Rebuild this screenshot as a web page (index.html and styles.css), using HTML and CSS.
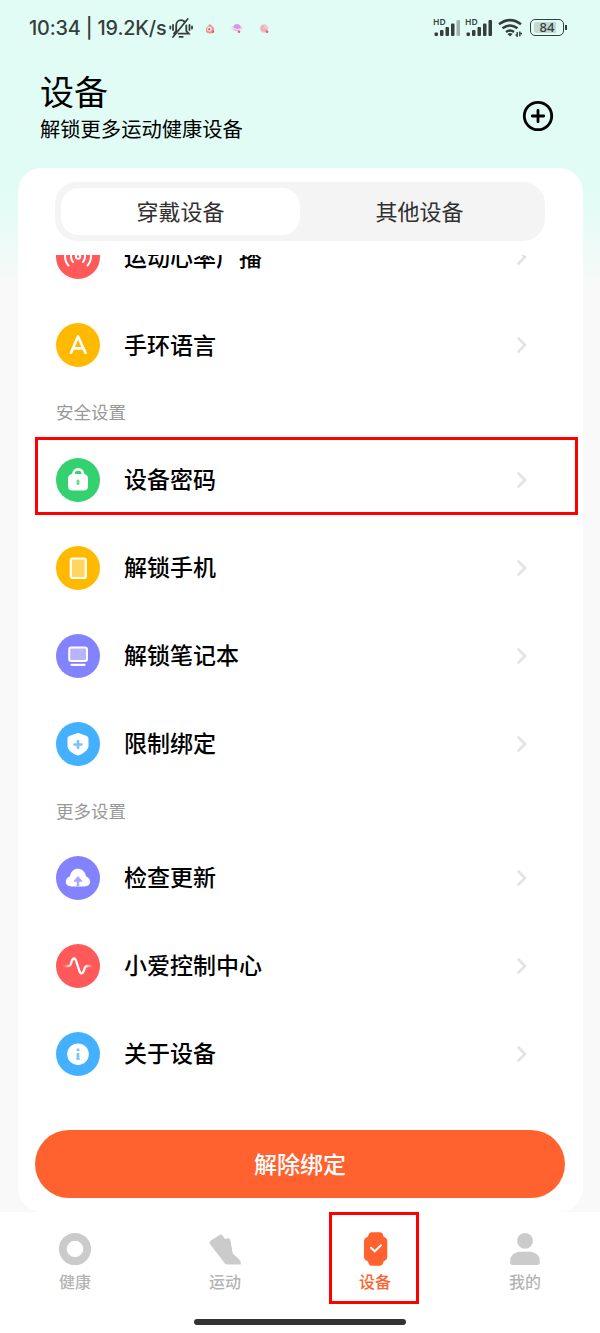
FILE: index.html
```html
<!DOCTYPE html>
<html lang="zh-CN">
<head>
<meta charset="utf-8">
<title>设备</title>
<link rel="stylesheet" href="styles.css">
</head>
<body>
<div class="app">
  <div class="status">
    <span class="clock">10:34 | 19.2K/s</span>
    <svg class="bell" width="24" height="22" viewBox="0 0 24 22" fill="none" stroke="#343e3b" stroke-width="1.8" stroke-linecap="round">
      <path d="M5 16.6 7.2 13.8V8.5C7.2 5.5 9.3 3.2 12 3.2c1.400 0 2.500.5 3.300 1.300M17.300 8.500v5.300l2.500 2.800H9.500M4 20 18.700 2M10.500 19.800h3.300M4 8v5M1.300 9.500v2M20.500 8v5M23 9.500v2"/>
    </svg>
    <span class="notes">
      <svg width="10" height="11" viewBox="0 0 10 11"><path d="M1 5 5 1l4 4v4q-4 3-8 0Z" fill="#ee8f92"/><circle cx="4.500" cy="6" r="2.500" fill="#fbe3e5"/><circle cx="4.300" cy="6.300" r="1" fill="#bd4155"/><circle cx="8" cy="8.800" r="1.200" fill="#e75866"/></svg>
      <svg width="12" height="11" viewBox="0 0 12 11"><ellipse cx="6" cy="5" rx="5.500" ry="2.800" fill="#f2c6df"/><circle cx="6" cy="4.500" r="3.500" fill="#d19be8"/><path d="M1 4.500q5 4 10 1" stroke="#fadcec" stroke-width="1.500" fill="none"/><circle cx="8" cy="8.800" r="1.300" fill="#e55f83"/></svg>
      <svg width="10" height="11" viewBox="0 0 10 11"><circle cx="5" cy="5.500" r="4.200" fill="#f2c7cc"/><path d="M5 3a2.500 2.500 0 1 0 2.500 3M5 5v2" stroke="#d8949d" stroke-width=".8" fill="none"/><circle cx="8" cy="8.800" r="1.300" fill="#df5d6b"/></svg>
    </span>
    <span class="radios">
      <svg width="27" height="20" viewBox="0 0 27 20" fill="#343e3b"><text class="hd" x="0" y="7.200">HD</text><rect x="1.500" y="14.500" width="3.500" height="3.500" rx=".9"/><rect x="7" y="12" width="3.500" height="6" rx=".9"/><rect x="12.500" y="9" width="3.500" height="9" rx=".9"/><rect x="18" y="5.500" width="3.500" height="12.500" rx=".9"/><rect x="23.500" y="2" width="3.500" height="16" rx=".9" fill="#a2b1ad"/></svg>
      <svg width="27" height="20" viewBox="0 0 27 20" fill="#343e3b"><text class="hd" x="0" y="7.200">HD</text><rect x="1.500" y="14.500" width="3.500" height="3.500" rx=".9"/><rect x="7" y="12" width="3.500" height="6" rx=".9"/><rect x="12.500" y="9" width="3.500" height="9" rx=".9"/><rect x="18" y="5.500" width="3.500" height="12.500" rx=".9"/><rect x="23.500" y="2" width="3.500" height="16" rx=".9"/></svg>
      <svg class="wifi" width="25" height="20" viewBox="0 0 25 20" fill="none" stroke="#343e3b" stroke-width="2.500"><path d="M1 6.300q11-8.300 22 0M4.500 10.300q7.500-5.700 15 0M8 14q4-3 8 0"/><path d="M9.500 16q2.500-2 5 0L12 18.500Z" fill="#343e3b" stroke="none"/><path d="M19.200 14v5M21.800 13.500v4.800M17.500 17h1.500M22 15.500h2" stroke-width="1.400"/></svg>
      <span class="battery"><span>84</span></span>
    </span>
  </div>

  <header class="head">
    <div>
      <h1>设备</h1>
      <p>解锁更多运动健康设备</p>
    </div>
    <svg class="add" width="32" height="32" viewBox="0 0 32 32" fill="none" stroke="#000" stroke-width="2.800" stroke-linecap="round"><circle cx="16" cy="16" r="13.700"/><path d="M16 10.300v11.400M10.300 16h11.400"/></svg>
  </header>

  <main class="sheet">
    <div class="tabs"><span class="tab on">穿戴设备</span><span class="tab">其他设备</span></div>
    <div class="scroller">
      <div class="list">
        <div class="row">
          <svg class="ico" viewBox="0 0 44 44"><circle cx="22" cy="22" r="22" fill="#ff5959"/><g fill="none" stroke="#fff" stroke-width="2" stroke-linecap="round"><circle cx="22" cy="21.500" r="2.200"/><path d="M17 27a8.500 8.500 0 0 1 0-11M27 27a8.500 8.500 0 0 0 0-11M12.500 30.500a13.500 13.500 0 0 1 0-18M31.500 30.500a13.500 13.500 0 0 0 0-18"/></g></svg>
          <span class="label">运动心率广播</span><svg class="go" viewBox="0 0 12 18"><path d="m2.500 2.500 6.500 6.500-6.500 6.500"/></svg>
        </div>
        <div class="row">
          <svg class="ico" viewBox="0 0 44 44"><circle cx="22" cy="22" r="22" fill="#ffba00"/><path d="M15 29.700 22 13.500l7.500 16.200M17.500 25.300h10" fill="none" stroke="#fff" stroke-width="2.700" stroke-linecap="round" stroke-linejoin="round"/></svg>
          <span class="label">手环语言</span><svg class="go" viewBox="0 0 12 18"><path d="m2.500 2.500 6.500 6.500-6.500 6.500"/></svg>
        </div>
        <h2 class="group">安全设置</h2>
        <div class="row marked">
          <svg class="ico" viewBox="0 0 44 44"><circle cx="22" cy="22" r="22" fill="#33d170"/><path d="M17.500 17v-1a4.700 4.700 0 0 1 9.400 0v1" fill="none" stroke="#fff" stroke-width="2.800"/><path d="M15.500 16h13q3.500 1 3.500 4.500V28q0 4.500-4.500 4.500h-11Q12 32.500 12 28v-7.500q0-3.500 3.500-4.500Z" fill="#fff"/><rect x="20.500" y="21.500" width="3" height="5.500" rx="1.500" fill="#66dc92"/></svg>
          <span class="label">设备密码</span><svg class="go" viewBox="0 0 12 18"><path d="m2.500 2.500 6.500 6.500-6.500 6.500"/></svg>
        </div>
        <div class="row">
          <svg class="ico" viewBox="0 0 44 44"><circle cx="22" cy="22" r="22" fill="#ffba00"/><rect x="14.800" y="12.500" width="15" height="19.500" rx="2" fill="#ffd55f" stroke="#fff" stroke-width="2.200"/></svg>
          <span class="label">解锁手机</span><svg class="go" viewBox="0 0 12 18"><path d="m2.500 2.500 6.500 6.500-6.500 6.500"/></svg>
        </div>
        <div class="row">
          <svg class="ico" viewBox="0 0 44 44"><circle cx="22" cy="22" r="22" fill="#8382ff"/><rect x="13.200" y="13.500" width="17.800" height="13.500" rx="2" fill="#b8b5ff" stroke="#fff" stroke-width="2"/><path d="M15.500 30.800h13" stroke="#fff" stroke-width="2.200" stroke-linecap="round"/></svg>
          <span class="label">解锁笔记本</span><svg class="go" viewBox="0 0 12 18"><path d="m2.500 2.500 6.500 6.500-6.500 6.500"/></svg>
        </div>
        <div class="row">
          <svg class="ico" viewBox="0 0 44 44"><circle cx="22" cy="22" r="22" fill="#43b1ff"/><path d="M20.800 11.300q1.200-.7 2.400 0l7.500 2.600q1.800.6 1.800 2.500v7.400c0 3.200-2.700 6.200-8.700 9.300q-1.800.9-3.600 0c-6-3-8.700-6.100-8.700-9.300v-7.400q0-1.900 1.800-2.500Z" fill="#fff"/><path d="M22 19v7M18.500 22.500h7" stroke="#74c5ff" stroke-width="2.600" stroke-linecap="round"/></svg>
          <span class="label">限制绑定</span><svg class="go" viewBox="0 0 12 18"><path d="m2.500 2.500 6.500 6.500-6.500 6.500"/></svg>
        </div>
        <h2 class="group more">更多设置</h2>
        <div class="row">
          <svg class="ico" viewBox="0 0 44 44"><circle cx="22" cy="22" r="22" fill="#8382ff"/><path d="M15.500 30.500c-7.500 0-7.200-8-1.500-10.200 1.300-10 14.500-10 16 0 5.800 2.400 5.800 10.200-1.500 10.200Z" fill="#fff"/><path d="m22 20.500 4 4.700h-8Z" fill="#aaa7ff" stroke="#aaa7ff" stroke-linejoin="round"/><path d="M22 24v6.500" stroke="#aaa7ff" stroke-width="2.500"/></svg>
          <span class="label">检查更新</span><svg class="go" viewBox="0 0 12 18"><path d="m2.500 2.500 6.500 6.500-6.500 6.500"/></svg>
        </div>
        <div class="row">
          <svg class="ico" viewBox="0 0 44 44"><defs><linearGradient id="fade"><stop offset="0" stop-color="#fff" stop-opacity=".1"/><stop offset=".25" stop-color="#fff"/><stop offset=".75" stop-color="#fff"/><stop offset="1" stop-color="#fff" stop-opacity=".2"/></linearGradient></defs><circle cx="22" cy="22" r="22" fill="#ff5959"/><path d="M8.500 22h4.200c1.900 0 2.100-2 2.900-4.500 1.200-4 3.500-4 4.700 0l3 9.200c1.200 3.700 3.300 3.700 4.500 0 .9-2.800 1.200-4.700 3.500-4.700h4" fill="none" stroke="url(#fade)" stroke-width="2.300" stroke-linecap="round"/></svg>
          <span class="label">小爱控制中心</span><svg class="go" viewBox="0 0 12 18"><path d="m2.500 2.500 6.500 6.500-6.500 6.500"/></svg>
        </div>
        <div class="row">
          <svg class="ico" viewBox="0 0 44 44"><circle cx="22" cy="22" r="22" fill="#43b1ff"/><circle cx="22" cy="22.200" r="10.800" fill="#fff"/><circle cx="22" cy="17.800" r="1.500" fill="#74c5ff"/><path d="M20.500 21h2.800v5.500h.7v1.300h-4v-1.300h.7V22h-.2Z" fill="#74c5ff"/></svg>
          <span class="label">关于设备</span><svg class="go" viewBox="0 0 12 18"><path d="m2.500 2.500 6.500 6.500-6.500 6.500"/></svg>
        </div>
      </div>
    </div>
    <button class="unbind">解除绑定</button>
  </main>

  <nav class="nav">
    <div class="item"><svg viewBox="0 0 36 36"><circle cx="18" cy="18" r="12.200" fill="none" stroke="#cbcbcb" stroke-width="7.800"/></svg><span>健康</span></div>
    <div class="item"><svg viewBox="0 0 36 36"><path d="M4 9.500 13 3.800q1.500-.6 2.500.7l2.800 3.800 2-1q2.500-.4 3 1.600l2.500 13.600 6 5.600q2.500 2.500 1.900 5.400H20.500q-1.800 0-3-1.500L3.200 13.200Q1.700 10.800 4 9.500Z" fill="#cbcbcb"/></svg><span>运动</span></div>
    <div class="item active"><svg viewBox="0 0 36 36"><path d="M14 1.300h9.500l2 1.200 1 3 2.300 1.500q1.500 1 1.500 3.200v15.600q0 2.200-1.500 3.200l-2.300 1.500-1 3-2 1.200H14l-2-1.200-1-3L8.500 29Q7 28 7 25.800V10.200Q7 8 8.500 7L11 5.500l1-3Z" fill="#ff622f"/><path d="m14 16.800 3.800 3.500 6.200-6" fill="none" stroke="#fff" stroke-width="2" stroke-linecap="round"/></svg><span>设备</span></div>
    <div class="item"><svg viewBox="0 0 36 36" fill="#cbcbcb"><circle cx="18" cy="9.900" r="7.900"/><path d="M11.500 20.800h13q8.300 2.200 8.300 9v1.700q0 2.500-2.500 2.500H5.700q-2.500 0-2.500-2.500v-1.700q0-6.800 8.300-9Z"/></svg><span>我的</span></div>
  </nav>
  <div class="home"></div>
</div>
</body>
</html>
```
FILE: styles.css
```css
* { box-sizing: border-box; }
body {
  margin: 0;
  font-family: "Noto Sans CJK SC", sans-serif;
  color: #000;
}
.app {
  display: flex;
  flex-direction: column;
  width: 600px;
  height: 1333px;
  overflow: hidden;
  background: linear-gradient(#e1fcf5 0, #e1fcf5 192px, #f9f9f9 292px);
}
.status {
  display: flex;
  align-items: center;
  height: 56px;
  padding: 0 33px 0 29px;
  color: #343e3b;
}
.clock {
  width: 136px;
  font: 450 19.800px/24px Inter, sans-serif;
  letter-spacing: -.15px;
  white-space: nowrap;
}
.bell { flex: none; margin-left: 4px; }
.notes {
  display: flex;
  gap: 16px;
  margin-left: 12px;
}
.radios {
  display: flex;
  align-items: center;
  gap: 5px;
  margin-left: auto;
}
.wifi { margin-left: 1px; }
.hd {
  font: 600 8.500px "Noto Sans", sans-serif;
}
.battery {
  position: relative;
  display: flex;
  justify-content: center;
  align-items: center;
  width: 34px;
  height: 17px;
  margin-top: -2px;
  margin-right: 3px;
  margin-left: 2px;
  border: 1.500px solid #343e3b;
  border-radius: 5px;
  font: 500 13px/14px "Noto Sans", sans-serif;
}
.battery span {
  width: 26px;
  height: 11px;
  line-height: 11px;
  text-align: center;
  background: linear-gradient(90deg, #c3dad4 84%, transparent 84%);
  border-radius: 2px;
}
.battery::after {
  content: "";
  position: absolute;
  right: -4px;
  top: 5px;
  width: 2px;
  height: 5px;
  background: #343e3b;
}
.head {
  display: flex;
  justify-content: space-between;
  height: 112px;
  padding: 11px 46px 0 40px;
}
.head h1 {
  margin: 0;
  font-size: 34px;
  font-weight: 400;
  line-height: 48px;
}
.head p {
  margin: 0;
  font-size: 20.300px;
  line-height: 26px;
}
.add { margin-top: 33px; }
.sheet {
  display: flex;
  flex-direction: column;
  height: 1044px;
  margin: 0 17.500px;
  padding: 14px 17.500px 0;
  background: #fff;
  border-radius: 24px;
}
.tabs {
  display: flex;
  height: 59px;
  margin: 0 20px;
  padding: 6px;
  background: #f4f4f4;
  border-radius: 22px;
}
.tab {
  flex: 1;
  height: 47px;
  font-size: 22px;
  line-height: 45px;
  text-align: center;
  color: #303030;
  border-radius: 18px;
}
.tab.on { background: #fff; }
.scroller {
  height: 861px;
  margin-top: 14px;
  margin-right: -13px;
  overflow: hidden;
}
.list { margin-top: -42px; }
.row {
  display: flex;
  align-items: center;
  height: 88px;
  padding: 0 50px 0 21px;
}
.ico {
  width: 44px;
  height: 44px;
}
.label {
  flex: 1;
  margin-left: 24px;
  padding-bottom: 3px;
  font-size: 23px;
  font-weight: 500;
  line-height: 34px;
}
.go {
  width: 12px;
  height: 18px;
  fill: none;
  stroke: #e3e3e3;
  stroke-width: 2.600;
  stroke-linecap: round;
  stroke-linejoin: round;
}
.group {
  height: 46.500px;
  margin: 0;
  padding-left: 21px;
  font-size: 17.500px;
  font-weight: 400;
  line-height: 46px;
  color: #999;
}
.group.more { height: 46px; line-height: 45px; }
.marked {
  height: 78px;
  margin: 1.500px 0 8.500px;
  padding: 7px 47px 0 18px;
  border: 3px solid #f00;
}
.unbind {
  flex: none;
  height: 68px;
  margin-top: 14px;
  padding: 0 0 3px;
  border: 0;
  border-radius: 34px;
  background: #ff622f;
  color: #fff;
  font: 500 23px/34px "Noto Sans CJK SC", sans-serif;
}
.nav {
  display: grid;
  grid-template-columns: repeat(4, 1fr);
  height: 92px;
  background: #fff;
}
.item {
  display: flex;
  flex-direction: column;
  align-items: center;
  justify-self: center;
  width: 90px;
  padding-top: 19px;
  font-size: 16px;
  font-weight: 500;
  line-height: 24px;
  color: #b4b4b4;
}
.item svg {
  width: 36px;
  height: 36px;
  margin-bottom: 2px;
}
.item.active {
  padding-top: 16px;
  padding-left: 2px;
  margin-left: -2px;
  color: #ff622f;
  border: 3px solid #f00;
}
.home {
  flex: 1;
  background: #fff;
}
.home::before {
  content: "";
  display: block;
  width: 212px;
  height: 6px;
  margin: 15px auto 0;
  border-radius: 3px;
  background: #333;
}
```
